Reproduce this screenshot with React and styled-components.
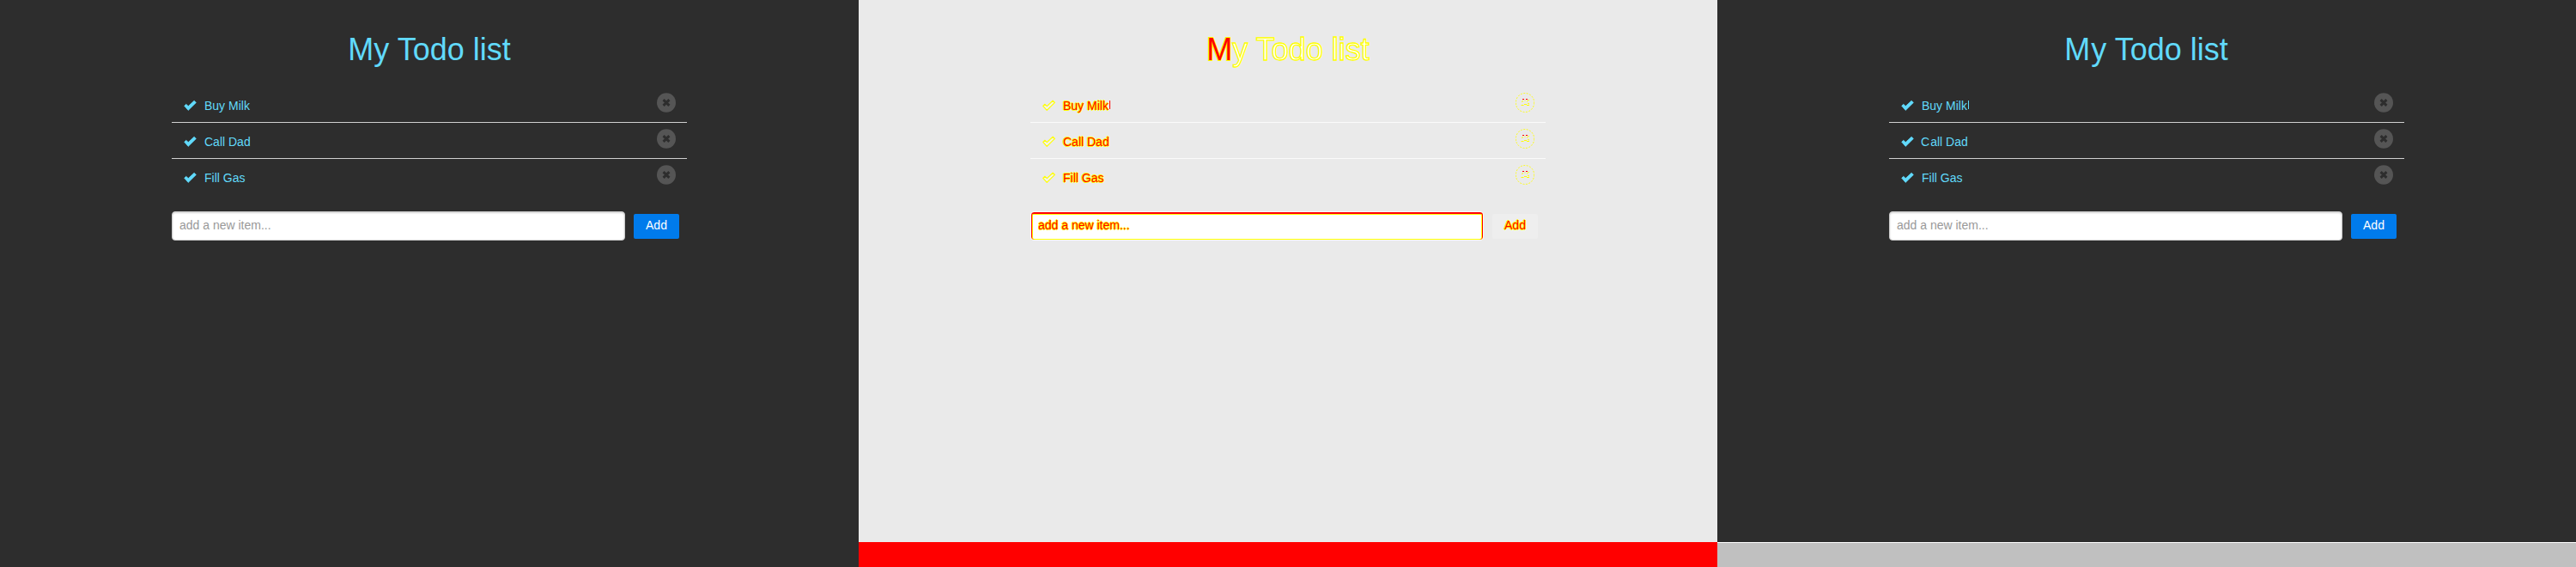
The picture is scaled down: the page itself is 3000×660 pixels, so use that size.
import React from "react";
import styled, { createGlobalStyle, css } from "styled-components";

const Global = createGlobalStyle`
  * { box-sizing: border-box; }
  body { margin: 0; background: #c0c0c0; font-family: "Liberation Sans", Arial, sans-serif; font-size: 14px; line-height: 20px; }
`;

const Board = styled.main`
  display: grid;
  grid-template-columns: repeat(3, 1000px);
  height: 660px;
  overflow: hidden;
`;

const Panel = styled.section`
  height: ${(p) => (p.$full ? 660 : 631)}px;
  padding: 38px 200px 0;
  background: ${(p) => (p.$diff ? "#eaeaea" : "#2d2d2d")};
  color: ${(p) => (p.$diff ? "#ff0000" : "#61dafb")};
`;

const Column = styled.div`
  display: flex;
  flex-direction: column;
`;

const Footer = styled.div`
  height: 29px;
  background: ${(p) => p.$color};
  border-top: ${(p) => (p.$line ? "1px solid #fff" : "none")};
`;

const marked = css`
  color: #ff0000;
  text-shadow: -1px 0 #ffff00, 1px 0 #ffff00, 0 -1px #ffff00, 0 1px #ffff00;
`;

const Title = styled.h1`
  margin: 0;
  height: 40px;
  font-size: 36px;
  font-weight: 400;
  line-height: 40px;
  text-align: center;
  ${(p) => p.$diff && css`
    -webkit-text-stroke: 1.3px #ffff00;
    color: #ffffff;
  `}
`;

const Marked = styled.span`
  color: #ff0000;
  -webkit-text-stroke: 2px #ffff00;
  paint-order: stroke fill;
`;

const Nudge = styled.span`
  margin: 0 1px 0 -1px;
`;

const Sliver = styled.i`
  display: inline-block;
  width: 1px;
  height: 10px;
  margin-left: 1px;
  vertical-align: 1px;
  background: ${(p) => (p.$diff ? "#ff0000" : "#61dafb")};
`;

const List = styled.ul`
  margin: 23px 0 0;
  padding: 0;
  list-style: none;
`;

const Item = styled.li`
  display: flex;
  height: 42px;
  padding: 0 13px 0 14px;
  border-bottom: 1px solid ${(p) => (p.$diff ? "#fafafa" : "#d0d0d0")};
  &:last-child { border-bottom-color: transparent; }
`;

const Check = styled.svg`
  width: 15px;
  height: 13px;
  margin-top: 15px;
  overflow: visible;
`;

const Label = styled.span`
  flex: 1;
  margin: 12px 0 0 9px;
  ${(p) => p.$diff && marked}
`;

const Remove = styled.svg`
  width: 22px;
  height: 23px;
  margin-top: 7px;
`;

const Form = styled.form`
  display: flex;
  align-items: center;
  gap: 10px;
  margin-top: 19px;
`;

const Field = styled.input`
  width: 528px;
  height: 34px;
  padding: 4px 8px 6px;
  border: 1px solid #ccc;
  border-radius: 4px;
  background: #fff;
  font: 14px "Liberation Sans", Arial, sans-serif;
  box-shadow: inset 0 1px 2px rgba(0, 0, 0, 0.18);
  &::placeholder { color: #999; opacity: 1; }
  ${(p) => p.$diff && css`
    border-color: #fafafa;
    box-shadow: inset 0 2px #ff0000, inset 1px 0 #ff0000, inset -1px 0 #ff0000,
      inset 0 3px #ffff00, inset 2px 0 #ffff00, inset -2px 0 #ffff00, inset 0 -1px #ffff00;
    &::placeholder { ${marked} }
  `}
`;

const Add = styled.button`
  width: 53px;
  height: 29px;
  padding: 0 0 3px;
  border: 0;
  border-radius: 2px;
  background: ${(p) => (p.$diff ? "#eeeeee" : "#007bec")};
  color: #fff;
  font: 14px "Liberation Sans", Arial, sans-serif;
  ${(p) => p.$diff && marked}
`;

const CheckIcon = ({ diff }) => (
  <Check viewBox="0 0 15 13">
    <path
      d="M.7 7.3 2.7 5.3 5.3 7.6 12.1 1.2 14.4 3.4 5.2 12.4Z"
      fill={diff ? "#f2f2f2" : "#61dafb"}
      stroke={diff ? "#ffff00" : "#61dafb"}
      strokeWidth={diff ? 1.2 : 0.7}
      strokeLinejoin="round"
    />
  </Check>
);

const RemoveIcon = ({ diff }) => (
  <Remove viewBox="0 0 22 23">
    {diff ? (
      <g fill="none" stroke="#ffff00">
        <ellipse cx="11" cy="11.5" rx="10.7" ry="11" strokeDasharray="2 1.5" strokeWidth=".9" />
        <path d="M8 7.5h2M12 7.5h2" stroke="#ff0000" />
        <path d="M7 10.5l2-1M10.5 9h1M13 10l3-2M14 12l2 1M6.5 14.5h3M10 13.5h3M13 14.5h3" />
      </g>
    ) : (
      <>
        <ellipse cx="11" cy="11.5" rx="11" ry="11.3" fill="#555" />
        <path d="m7.6 8.1 6.8 6.8M14.4 8.1l-6.8 6.8" stroke="#2d2d2d" strokeWidth="3" />
      </>
    )}
  </Remove>
);

const titles = {
  before: "My Todo list",
  diff: <><Marked>M</Marked>y Todo list</>,
  after: <><Nudge>M</Nudge>y Todo list</>,
};

const Todo = ({ kind, items }) => {
  const diff = kind === "diff";
  return (
    <Panel $diff={diff} $full={kind === "before"}>
      <Title $diff={diff}>{titles[kind]}</Title>
      <List>
        {items.map((item, i) => (
          <Item key={item} $diff={diff}>
            <CheckIcon diff={diff} />
            <Label $diff={diff}>
              {kind === "after" && i === 1 ? <><Nudge>C</Nudge>{item.slice(1)}</> : item}
              {kind !== "before" && i === 0 && <Sliver $diff={diff} />}
            </Label>
            <RemoveIcon diff={diff} />
          </Item>
        ))}
      </List>
      <Form>
        <Field $diff={diff} placeholder="add a new item..." />
        <Add type="button" $diff={diff}>Add</Add>
      </Form>
    </Panel>
  );
};

const items = ["Buy Milk", "Call Dad", "Fill Gas"];

export default function App() {
  return (
    <>
      <Global />
      <Board>
        <Todo kind="before" items={items} />
        <Column>
          <Todo kind="diff" items={items} />
          <Footer $color="#ff0000" />
        </Column>
        <Column>
          <Todo kind="after" items={items} />
          <Footer $color="#c0c0c0" $line />
        </Column>
      </Board>
    </>
  );
}
